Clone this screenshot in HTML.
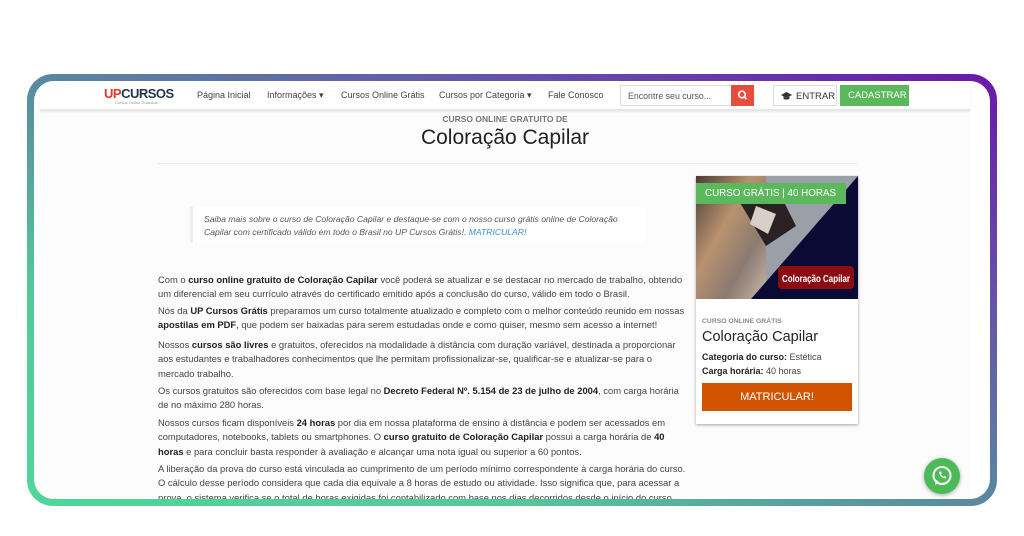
<!DOCTYPE html>
<html><head><meta charset="utf-8">
<style>
*{margin:0;padding:0;box-sizing:border-box}
body{width:1024px;height:536px;background:#fff;font-family:"Liberation Sans",Arial,sans-serif;position:relative;overflow:hidden;color:#333}
.frame{position:absolute;left:27px;top:74px;width:970px;height:432px;border-radius:26px;background:linear-gradient(to top right,#4fd69a 0%,#55c89a 25%,#5a88a0 50%,#6650a8 75%,#6a18a8 100%);}
.inner{position:absolute;left:7px;top:7px;right:7px;bottom:7px;border-radius:20px;background:#fff;overflow:hidden}
.page{position:absolute;left:6px;top:0;width:930px;height:430px;background:#fcfcfc}
.nav{position:absolute;left:0;top:0;width:930px;height:30px;background:#fff;border-bottom:2px solid #e6e6e6;box-shadow:0 1px 2px rgba(0,0,0,.08)}
.abs{position:absolute;white-space:nowrap}
.nl{font-size:9px;color:#444;top:9px}
.logo{left:64px;top:5px;font-weight:bold;font-size:13px;letter-spacing:-0.5px}
.logo .u{color:#e03a2f}.logo .c{color:#1f3550}
.sub{left:75px;top:19px;font-size:4px;color:#999}
.inp{left:580px;top:4px;width:112px;height:21px;border:1px solid #ddd;font-size:8.8px;color:#555;padding:5px 7px;background:#fff}
.sbtn{left:691px;top:4px;width:23px;height:21px;background:#e74c3c}
.ent{left:733px;top:4px;width:64px;height:21px;border:1px solid #ddd;font-size:9.5px;color:#333;padding:5px 0 0 22px;background:#fff}
.cad{left:800px;top:4px;width:69px;height:21px;background:#5cb85c;color:#fff;font-size:9.5px;padding:5px 0 0 8px}
.p{font-size:9.4px;line-height:14.3px;color:#444;left:118px}
.p b{color:#222}
.card{left:656px;top:95px;width:162px;height:248px;background:#fff;box-shadow:0 1px 3px rgba(0,0,0,.35)}
</style></head><body>
<div class="frame"><div class="inner"><div class="page">
 <div class="nav">
  <div class="abs logo"><span class="u">UP</span><span class="c">CURSOS</span></div>
  <div class="abs sub">Cursos Online Gratuitos</div>
  <div class="abs nl" style="left:157px">Página Inicial</div>
  <div class="abs nl" style="left:227px">Informações ▾</div>
  <div class="abs nl" style="left:301px">Cursos Online Grátis</div>
  <div class="abs nl" style="left:399px">Cursos por Categoria ▾</div>
  <div class="abs nl" style="left:508px">Fale Conosco</div>
  <div class="abs inp">Encontre seu curso...</div>
  <div class="abs sbtn"><svg width="23" height="21"><circle cx="11" cy="9.5" r="3.3" fill="none" stroke="#fff" stroke-width="1.6"/><line x1="13.4" y1="12" x2="15.5" y2="14.2" stroke="#fff" stroke-width="1.8"/></svg></div>
  <div class="abs ent"><svg class="abs" style="left:7px;top:6px" width="11" height="8"><path d="M0 3L5.5 0 11 3 5.5 6z" fill="#333"/><path d="M2.5 4.5v2.2c1.5 1 4.5 1 6 0V4.5L5.5 6z" fill="#333"/></svg>ENTRAR</div>
  <div class="abs cad">CADASTRAR</div>
 </div>
 <div class="abs" style="left:0;width:930px;top:33px;text-align:center;font-size:8.5px;font-weight:bold;color:#777">CURSO ONLINE GRATUITO DE</div>
 <div class="abs" style="left:0;width:930px;top:45px;text-align:center;font-size:21px;color:#222">Coloração Capilar</div>
 <div class="abs" style="left:118px;top:82px;width:699px;height:1px;background:#ececec"></div>
 <div class="abs" style="left:150px;top:126px;width:455px;height:36px;border-left:3px solid #eee;background:#fff"></div>
 <div class="abs" style="left:164px;top:132px;font-size:8.6px;line-height:13px;font-style:italic;color:#555">Saiba mais sobre o curso de Coloração Capilar e destaque-se com o nosso curso grátis online de Coloração<br>Capilar com certificado válido em todo o Brasil no UP Cursos Grátis!. <span style="color:#3a8fd0">MATRICULAR!</span></div>
 <div class="abs p" style="top:192px">Com o <b>curso online gratuito de Coloração Capilar</b> você poderá se atualizar e se destacar no mercado de trabalho, obtendo<br>um diferencial em seu currículo através do certificado emitido após a conclusão do curso, válido em todo o Brasil.</div>
 <div class="abs p" style="top:223px">Nós da <b>UP Cursos Grátis</b> preparamos um curso totalmente atualizado e completo com o melhor conteúdo reunido em nossas<br><b>apostilas em PDF</b>, que podem ser baixadas para serem estudadas onde e como quiser, mesmo sem acesso a internet!</div>
 <div class="abs p" style="top:257px">Nossos <b>cursos são livres</b> e gratuitos, oferecidos na modalidade à distância com duração variável, destinada a proporcionar<br>aos estudantes e trabalhadores conhecimentos que lhe permitam profissionalizar-se, qualificar-se e atualizar-se para o<br>mercado trabalho.</div>
 <div class="abs p" style="top:303px">Os cursos gratuitos são oferecidos com base legal no <b>Decreto Federal Nº. 5.154 de 23 de julho de 2004</b>, com carga horária<br>de no máximo 280 horas.</div>
 <div class="abs p" style="top:335px">Nossos cursos ficam disponíveis <b>24 horas</b> por dia em nossa plataforma de ensino à distância e podem ser acessados em<br>computadores, notebooks, tablets ou smartphones. O <b>curso gratuito de Coloração Capilar</b> possui a carga horária de <b>40</b><br><b>horas</b> e para concluir basta responder à avaliação e alcançar uma nota igual ou superior a 60 pontos.</div>
 <div class="abs p" style="top:381px">A liberação da prova do curso está vinculada ao cumprimento de um período mínimo correspondente à carga horária do curso.<br>O cálculo desse período considera que cada dia equivale a 8 horas de estudo ou atividade. Isso significa que, para acessar a<br>prova, o sistema verifica se o total de horas exigidas foi contabilizado com base nos dias decorridos desde o início do curso.</div>
 <div class="abs card">
  <svg class="abs" style="left:0;top:0" width="162" height="123">
   <defs><linearGradient id="h" x1="0" y1="0" x2="1" y2="1"><stop offset="0" stop-color="#4a3b32"/><stop offset=".4" stop-color="#b99270"/><stop offset=".7" stop-color="#8a7a70"/><stop offset="1" stop-color="#c9b8a8"/></linearGradient></defs>
   <rect width="162" height="123" fill="#9aa0a8"/>
   <path d="M0 0h70v123H0z" fill="url(#h)"/>
   <path d="M40 20l40-10 20 40-30 20z" fill="#2a2222"/>
   <path d="M60 30l20 8-8 20-18-10z" fill="#d8d0c8"/>
   <path d="M162 0v123H55z" fill="#0a0a35"/>
   <rect x="82" y="90" width="76" height="23" rx="4" fill="#8b0d12"/>
   <text x="120" y="106" font-family="Liberation Sans Narrow,Liberation Sans,sans-serif" font-weight="bold" font-size="10" fill="#fff" text-anchor="middle" textLength="68" lengthAdjust="spacingAndGlyphs">Coloração Capilar</text>
  </svg>
  <div class="abs" style="left:0;top:7px;width:150px;height:21px;background:#5cb85c;color:#fff;font-size:9.8px;padding:5px 0 0 9px">CURSO GRÁTIS | 40 HORAS</div>
  <div class="abs" style="left:6px;top:142px;font-size:6.8px;font-weight:bold;color:#888">CURSO ONLINE GRÁTIS</div>
  <div class="abs" style="left:6px;top:153px;font-size:14.5px;color:#222">Coloração Capilar</div>
  <div class="abs" style="left:6px;top:176px;font-size:9px;color:#444"><b style="color:#222">Categoria do curso:</b> Estética</div>
  <div class="abs" style="left:6px;top:190px;font-size:9px;color:#444"><b style="color:#222">Carga horária:</b> 40 horas</div>
  <div class="abs" style="left:6px;top:207px;width:150px;height:28px;background:#d35400;color:#fff;font-size:11px;text-align:center;padding-top:8px">MATRICULAR!</div>
 </div>
 <div class="abs" style="left:884px;top:377px;width:36px;height:36px;border-radius:50%;background:#4cba57;box-shadow:0 1px 4px rgba(0,0,0,.35)">
  <svg width="36" height="36"><circle cx="18" cy="17.5" r="8.5" fill="none" stroke="#fff" stroke-width="2"/><path d="M11 27l1.6-5 3 2.5z" fill="#fff"/><path d="M15 14c0 3 3 6.5 6.5 6.5l1-1.5-2-1-1 .8c-1-.5-2-1.5-2.5-2.5l.8-1-1-2z" fill="#fff"/></svg>
 </div>
</div></div></div>
</body></html>
